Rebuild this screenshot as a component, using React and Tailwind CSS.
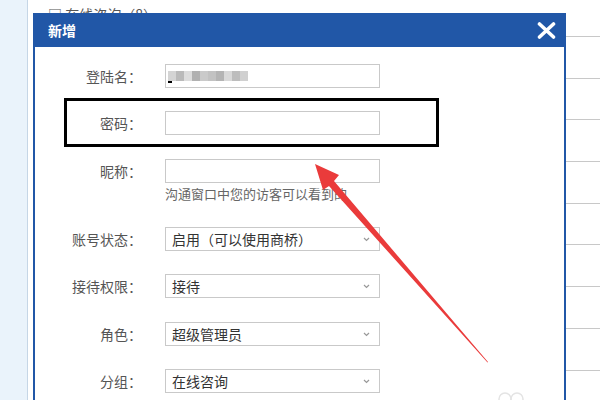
import React from 'react';

const font = { fontFamily: '"Microsoft YaHei", "Noto Sans CJK SC", "Noto Sans", sans-serif' };

const Chevron = () => (
  <svg width="7" height="5" viewBox="0 0 7 5" className="shrink-0">
    <path d="M1 1l2.5 2.5L6 1" fill="none" stroke="#999" strokeWidth="1.2" />
  </svg>
);

const Label = ({ children }) => (
  <div className="w-[97px] shrink-0 text-right text-[14px] text-[#555] leading-6">{children}</div>
);

const Field = ({ children, className = '' }) => (
  <div className={`w-[215px] h-6 border border-[#c9c9c9] bg-white flex items-center ${className}`}>{children}</div>
);

const Select = ({ value }) => (
  <Field className="pl-[6px] pr-[9px] justify-between">
    <span className="text-[14px] text-[#333] leading-none">{value}</span>
    <Chevron />
  </Field>
);

const Row = ({ label, children, className = '' }) => (
  <div className={`flex items-start gap-[23px] ${className}`}>
    <Label>{label}</Label>
    <div>{children}</div>
  </div>
);

// blurred username mosaic
const mosaic = ['#c9c9c9', '#a9a9a9', '#d4d4d4', '#9e9e9e', '#bdbdbd', '#b3b3b3', '#a1a1a1', '#d0d0d0', '#acacac', '#c4c4c4'];

export default function App() {
  return (
    <div className="relative w-[600px] h-[400px] overflow-hidden bg-white" style={font}>
      {/* page behind dialog */}
      <div className="absolute inset-y-0 left-0 w-[28px] bg-[#eaf3fb] border-r border-[#c6d6e6]" />
      <div className="absolute left-[48px] top-[4px] text-[14px] text-[#555]">□ 在线咨询（8）</div>
      <div className="absolute left-[566px] right-0 top-[36px] flex flex-col gap-[40.7px]">
        {[0, 1, 2, 3, 4, 5, 6, 7, 8].map((i) => (
          <div key={i} className="h-px bg-[#c8c8c8]" />
        ))}
      </div>

      {/* dialog */}
      <div className="absolute left-[33px] top-[13px] w-[533px] h-[400px] bg-white border-x-2 border-[#2157a7]">
        <div className="h-[34px] -mx-[2px] bg-[#2157a7] flex items-center justify-between pl-[15px] pr-[10px]">
          <span className="text-white text-[14px] font-bold">新增</span>
          <svg width="19" height="17" viewBox="0 0 19 17">
            <path d="M2.5 2l14 13M16.5 2l-14 13" stroke="#fff" strokeWidth="3.6" strokeLinecap="round" />
          </svg>
        </div>

        <div className="pt-[17px] pl-[10px]">
          <Row label="登陆名：">
            <Field className="pl-[2px] relative">
              <div className="flex items-center h-[14px]">
                {mosaic.map((c, i) => (
                  <span key={i} className="w-2 h-[10px]" style={{ background: c, opacity: 0.8 }} />
                ))}
              </div>
              <span className="absolute left-[2px] bottom-[4px] w-[4px] h-[2px] bg-black" />
            </Field>
          </Row>
          <Row label="密码：" className="mt-[23px]">
            <Field />
          </Row>
          <Row label="昵称：" className="mt-[24px]">
            <Field />
            <div className="text-[13px] text-[#666] leading-[20px] mt-[1px] whitespace-nowrap">沟通窗口中您的访客可以看到的</div>
          </Row>
          <Row label="账号状态：" className="mt-[23px]">
            <Select value="启用（可以使用商桥）" />
          </Row>
          <Row label="接待权限：" className="mt-[23px]">
            <Select value="接待" />
          </Row>
          <Row label="角色：" className="mt-[24px]">
            <Select value="超级管理员" />
          </Row>
          <Row label="分组：" className="mt-[23px]">
            <Select value="在线咨询" />
          </Row>
        </div>

        {/* annotation box around password row */}
        <div className="absolute left-[29px] top-[85px] w-[375px] h-[49px] border-[3px] border-black" />
      </div>

      {/* red annotation arrow */}
      <svg className="absolute inset-0 pointer-events-none" width="600" height="400" viewBox="0 0 600 400">
        <polygon points="315,164 339,175 334,181 488,362 487.5,362.5 329,186 323,190" fill="#ea3b3b" />
      </svg>

      {/* faint watermark */}
      <svg className="absolute left-[490px] top-[385px]" width="40" height="20" viewBox="0 0 40 20">
        <circle cx="15" cy="14" r="6" fill="none" stroke="#e4e4e4" strokeWidth="1.5" />
        <circle cx="27" cy="14" r="6" fill="none" stroke="#e4e4e4" strokeWidth="1.5" />
      </svg>
    </div>
  );
}
